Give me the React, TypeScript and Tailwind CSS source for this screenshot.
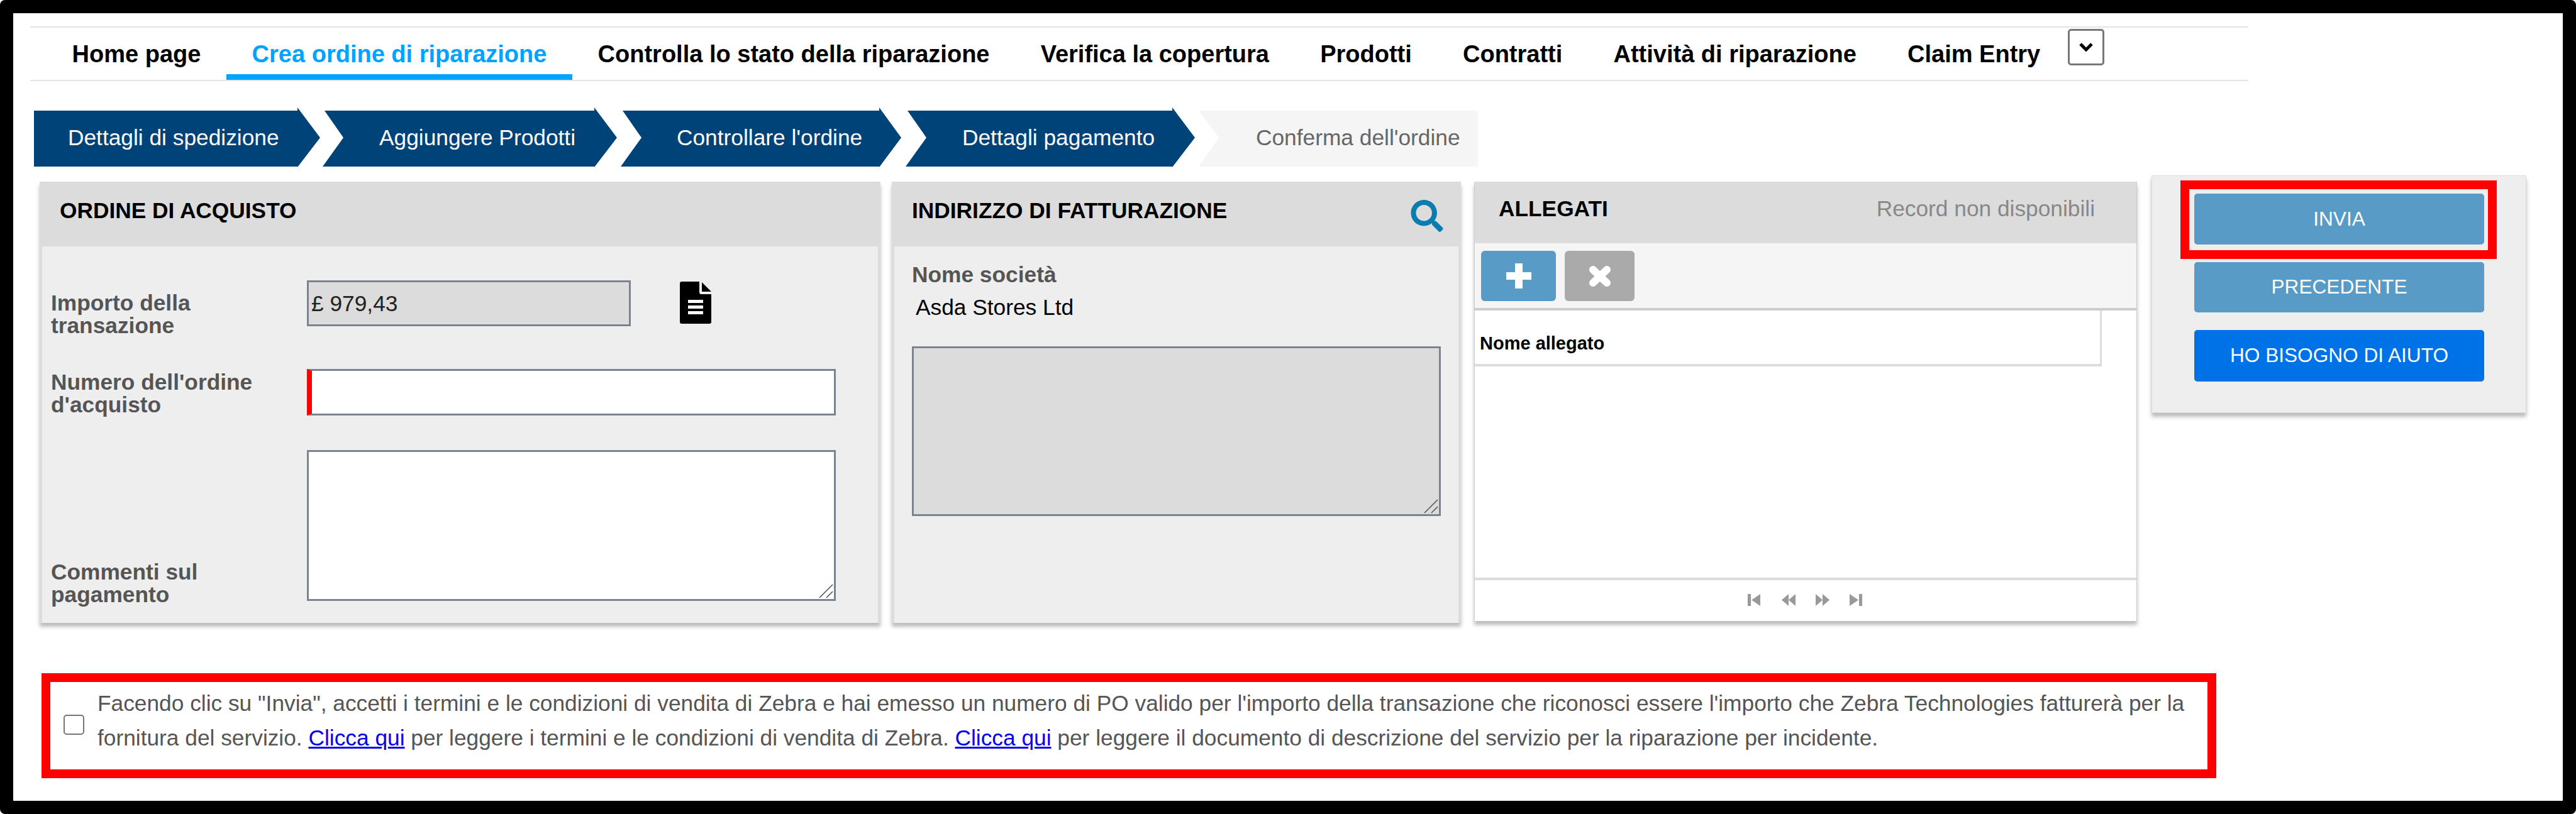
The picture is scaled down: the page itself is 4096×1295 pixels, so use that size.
import React from "react";
import { FaSearch } from "react-icons/fa";

const font = "font-['Liberation_Sans',Arial,sans-serif]";

const navItems = [
  "Home page",
  "Crea ordine di riparazione",
  "Controlla lo stato della riparazione",
  "Verifica la copertura",
  "Prodotti",
  "Contratti",
  "Attività di riparazione",
  "Claim Entry",
];

function Nav() {
  return (
    <div className="mt-[21px] ml-[27px] w-[3527px] h-[87px] border-y-2 border-[#e4e4e4] flex items-stretch pl-[26px] text-[38px] leading-[40px] font-bold text-black">
      {navItems.map((t, i) => (
        <div
          key={t}
          className={
            i === 1
              ? "px-[40.6px] pt-[22px] border-b-[9px] border-[#00a3ff] text-[#00a3ff] whitespace-nowrap"
              : "px-[40.6px] pt-[22px] whitespace-nowrap"
          }
        >
          {t}
        </div>
      ))}
      <button className="ml-[3px] mt-[2px] w-[58px] h-[58px] border-[3px] border-[#777] rounded-[5px] flex justify-center pt-[19px] bg-white">
        <svg width="24" height="15" viewBox="0 0 24 15">
          <path d="M3 2l9 9 9-9" fill="none" stroke="#000" strokeWidth="5" />
        </svg>
      </button>
    </div>
  );
}

function Steps() {
  return (
    <div className="mt-[42px] ml-[33px] flex text-[35.3px] leading-[40px] text-white">
      <div className="w-[455px] h-[95px] bg-[#004379] flex items-center pl-[54px] whitespace-nowrap [clip-path:polygon(0_5px,419px_5px,419px_0,455px_48px,419px_95px,419px_94px,0_94px)]">
        Dettagli di spedizione
      </div>
      <div className="ml-[4px] w-[468px] h-[95px] bg-[#004379] flex items-center pl-[90px] whitespace-nowrap [clip-path:polygon(3px_5px,432px_5px,432px_0,468px_48px,432px_95px,432px_94px,0_94px,33px_48px)]">
        Aggiungere Prodotti
      </div>
      <div className="ml-[6px] w-[446px] h-[95px] bg-[#004379] flex items-center pl-[89px] whitespace-nowrap [clip-path:polygon(3px_5px,411px_5px,411px_0,446px_48px,411px_95px,411px_94px,0_94px,33px_48px)]">
        Controllare l'ordine
      </div>
      <div className="ml-[7px] w-[460px] h-[95px] bg-[#004379] flex items-center pl-[90px] whitespace-nowrap [clip-path:polygon(3px_5px,424px_5px,424px_0,460px_48px,424px_95px,424px_94px,0_94px,33px_48px)]">
        Dettagli pagamento
      </div>
      <div className="ml-[6px] w-[444px] h-[95px] bg-[#f5f5f5] text-[#666] flex items-center pl-[91px] whitespace-nowrap [clip-path:polygon(0_5px,444px_5px,444px_94px,0_94px,32px_48px)]">
        Conferma dell'ordine
      </div>
    </div>
  );
}

function DocIcon() {
  return (
    <svg width="50" height="67" viewBox="0 0 50 67" className="ml-[78px] mt-[2px] shrink-0">
      <path d="M3 0h28v17a3 3 0 0 0 3 3h16v44a3 3 0 0 1-3 3H3a3 3 0 0 1-3-3V3a3 3 0 0 1 3-3z" fill="#000" />
      <path d="M35 1l15 15H35z" fill="#000" />
      <rect x="13" y="29" width="24" height="5" fill="#fff" />
      <rect x="13" y="38" width="24" height="5" fill="#fff" />
      <rect x="13" y="47" width="24" height="5" fill="#fff" />
    </svg>
  );
}

function Grip() {
  return (
    <svg width="23" height="23" viewBox="0 0 23 23" className="absolute right-[4px] bottom-[4px]">
      <path d="M1 22L22 1M12 22L22 12" stroke="#555" strokeWidth="1.6" fill="none" />
    </svg>
  );
}

function PagerIcon({ kind }: { kind: "first" | "prev" | "next" | "last" }) {
  const d = {
    first: "M0 0h5v19H0zM20 0v19L6 9.5z",
    prev: "M11 0v19L0 9.5zM22 0v19L11 9.5z",
    next: "M0 0v19l11-9.5zM11 0v19l11-9.5z",
    last: "M0 0v19l14-9.5zM15 0h5v19h-5z",
  }[kind];
  return (
    <svg width="22" height="19" viewBox="0 0 22 19">
      <path d={d} fill="#999" />
    </svg>
  );
}

const label = "text-[#555] font-bold text-[35.3px] leading-[36px]";
const title = "text-[35.3px] leading-[40px] font-bold text-black";
const panelShadow = "shadow-[0_6px_6px_rgba(0,0,0,0.27)]";

function OrderPanel() {
  return (
    <div className={`mt-[10px] w-[1337px] h-[702px] bg-[#eeeeee] border-x-[4px] border-[#dcdcdc] ${panelShadow}`}>
      <div className={`h-[103px] bg-[#dcdcdc] pl-[28px] pt-[26px] ${title}`}>ORDINE DI ACQUISTO</div>
      <div className="pt-[54px] pl-[14px] flex flex-col">
        <div className="flex h-[73px]">
          <div className={`${label} w-[407px] shrink-0 mt-[18px]`}>Importo della<br />transazione</div>
          <input readOnly value="£ 979,43" className="w-[515px] h-[73px] bg-[#dcdcdc] border-[3px] border-[#7d8290] px-[4px] text-[35.3px] text-[#222]" />
          <DocIcon />
        </div>
        <div className="flex h-[74px] mt-[68px]">
          <div className={`${label} w-[407px] shrink-0 mt-[3px]`}>Numero dell'ordine<br />d'acquisto</div>
          <input readOnly className="w-[841px] h-[74px] bg-white border-[3px] border-l-[8px] border-[#7d8290] border-l-[#ff0000]" />
        </div>
        <div className="flex items-end h-[240px] mt-[55px]">
          <div className={`${label} w-[407px] shrink-0 mb-[-8px]`}>Commenti sul<br />pagamento</div>
          <div className="relative w-[841px] h-[240px]">
            <textarea readOnly className="block w-full h-full bg-white border-[3px] border-[#7d8290] resize-none" />
            <Grip />
          </div>
        </div>
      </div>
    </div>
  );
}

function AddressPanel() {
  return (
    <div className={`ml-[18px] mt-[10px] w-[905px] h-[702px] bg-[#eeeeee] border-x-[4px] border-[#dcdcdc] ${panelShadow}`}>
      <div className={`h-[103px] bg-[#dcdcdc] pl-[28px] pr-[24px] pt-[26px] flex justify-between items-start ${title}`}>
        <span>INDIRIZZO DI FATTURAZIONE</span>
        <FaSearch className="text-[#0a7db0] w-[52px] h-[51px] mt-[3px]" />
      </div>
      <div className="pl-[28px] pt-[27px]">
        <div className={label}>Nome società</div>
        <div className="mt-[16px] ml-[6px] text-[35.3px] leading-[36px] text-black">Asda Stores Ltd</div>
        <div className="relative mt-[44px] w-[841px] h-[270px]">
          <textarea readOnly className="block w-full h-full bg-[#dcdcdc] border-[3px] border-[#7d8290] resize-none" />
          <Grip />
        </div>
      </div>
    </div>
  );
}

function AttachPanel() {
  return (
    <div className={`ml-[21px] mt-[10px] w-[1054px] h-[699px] bg-white border-x border-[#ccc] ${panelShadow} flex flex-col`}>
      <div className="h-[98px] bg-[#dcdcdc] pl-[38px] pr-[66px] pt-[23px] flex justify-between items-start leading-[40px]">
        <span className={title}>ALLEGATI</span>
        <span className="text-[35.3px] text-[#888]">Record non disponibili</span>
      </div>
      <div className="h-[107px] bg-[#f5f5f5] border-b-[4px] border-[#cccccc] flex items-start gap-[14px] pl-[10px] pt-[12px]">
        <div className="w-[119px] h-[80px] rounded-[6px] bg-[#589bc7] flex items-center justify-center">
          <svg width="40" height="40" viewBox="0 0 40 40">
            <path d="M14 0h12v14h14v12H26v14H14V26H0V14h14z" fill="#fff" />
          </svg>
        </div>
        <div className="w-[111px] h-[80px] rounded-[6px] bg-[#aaaaaa] flex items-center justify-center">
          <svg width="36" height="33" viewBox="0 0 36 33">
            <path d="M7 6l22 21M29 6L7 27" stroke="#fff" strokeWidth="12" strokeLinecap="round" fill="none" />
          </svg>
        </div>
      </div>
      <div className="w-[997px] h-[89px] bg-white border-r-[3px] border-b-[4px] border-[#dcdcdc] pl-[8px] pt-[35px] text-[29px] leading-[34px] font-bold text-black">Nome allegato</div>
      <div className="flex-1" />
      <div className="h-[69px] border-t-[4px] border-[#dcdcdc] flex items-center justify-center gap-[32px] pb-[3px]">
        <PagerIcon kind="first" />
        <PagerIcon kind="prev" />
        <PagerIcon kind="next" />
        <PagerIcon kind="last" />
      </div>
    </div>
  );
}

const btn = "w-[461px] rounded-[5px] text-white text-[31.6px] flex items-center justify-center";

function ActionPanel() {
  return (
    <div className={`relative ml-[23px] w-[596px] h-[378px] bg-[#eeeeee] border border-[#dcdcdc] ${panelShadow} pl-[67px] pt-[28px] flex flex-col`}>
      <div className={`${btn} h-[81px] bg-[#589bc7]`}>INVIA</div>
      <div className={`${btn} h-[80px] mt-[28px] bg-[#589bc7]`}>PRECEDENTE</div>
      <div className={`${btn} h-[82px] mt-[28px] bg-[#0072e8]`}>HO BISOGNO DI AIUTO</div>
      <div className="absolute left-[45px] top-[7px] w-[503px] h-[125px] border-[14px] border-[#ff0000]" />
    </div>
  );
}

function Terms() {
  return (
    <div className="mt-[80px] ml-[45px] w-[3458px] h-[167px] border-[14px] border-[#ff0000] flex items-start text-[35.3px] leading-[54.5px] text-[#555]">
      <input type="checkbox" className="appearance-none w-[33px] h-[32px] mt-[52px] ml-[21px] border-[2px] border-[#767676] rounded-[5px] bg-white shrink-0" />
      <div className="ml-[21px] pt-[7px] whitespace-nowrap">
        Facendo clic su "Invia", accetti i termini e le condizioni di vendita di Zebra e hai emesso un numero di PO valido per l'importo della transazione che riconosci essere l'importo che Zebra Technologies fatturerà per la
        <br />
        fornitura del servizio. <a href="#" className="text-[#0000ee] underline">Clicca qui</a> per leggere i termini e le condizioni di vendita di Zebra. <a href="#" className="text-[#0000ee] underline">Clicca qui</a> per leggere il documento di descrizione del servizio per la riparazione per incidente.
      </div>
    </div>
  );
}

export default function App() {
  return (
    <div className={`${font} w-[4096px] h-[1295px] bg-black rounded-[8px] p-[21px] overflow-hidden`}>
      <div className="w-[4054px] h-[1253px] bg-white flex flex-col">
        <Nav />
        <Steps />
        <div className="mt-[13px] ml-[42px] flex items-start">
          <OrderPanel />
          <AddressPanel />
          <AttachPanel />
          <ActionPanel />
        </div>
        <Terms />
      </div>
    </div>
  );
}
